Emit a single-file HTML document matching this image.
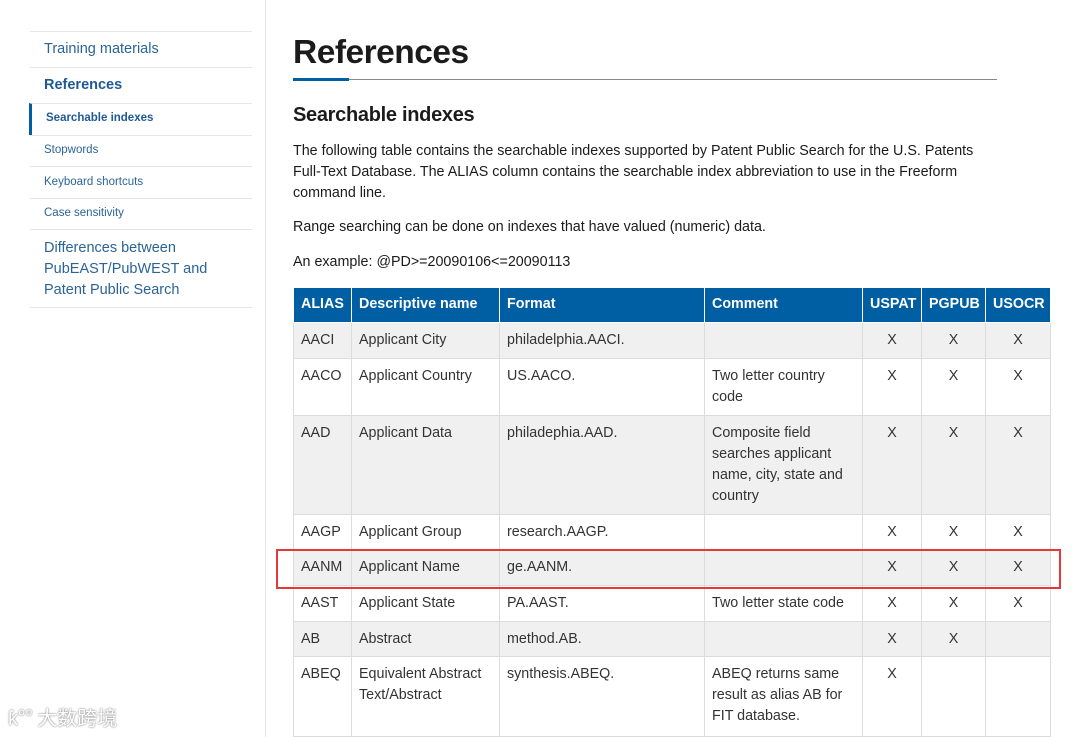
<!DOCTYPE html>
<html><head><meta charset="utf-8"><style>
*{margin:0;padding:0;box-sizing:border-box}
body{width:1080px;height:737px;overflow:hidden;background:#fff;font-family:"Liberation Sans",Arial,sans-serif;color:#1b1b1b;position:relative}
.side{position:absolute;left:0;top:0;width:266px;height:737px;border-right:1px solid #e6e6e6}
.nav{position:absolute;left:30px;width:222px;border-top:1px solid #e6e6e6;color:#2a6496}
.nav div{position:absolute;left:14px}
h1{position:absolute;left:293px;top:34px;font-size:33.5px;font-weight:bold;letter-spacing:-0.5px;color:#1b1b1b}
h2{position:absolute;left:293px;top:104px;font-size:20px;font-weight:bold;letter-spacing:-0.3px}
p{position:absolute;left:293px;font-size:14.3px;line-height:21px;width:700px}
table{position:absolute;left:293px;top:288px;width:757px;border-collapse:collapse;table-layout:fixed;font-size:14.3px}
td,th{border:1px solid #dcdcdc;padding:7px 7px 6px;line-height:21px;vertical-align:top;text-align:left;font-weight:normal;color:#333}
th{background:#005ea2;color:#fff;font-weight:bold;border-color:#fff;padding:6px 7px;height:34px;border-top:none}
tr.g td{background:#f0f0f0}
.c{text-align:center}
</style></head><body>
<div class="side">
 <div class="nav" style="top:31px;height:37px"><div style="top:9px;font-size:14.5px">Training materials</div></div>
 <div class="nav" style="top:67px;height:36px"><div style="top:9px;font-size:14.5px;font-weight:bold;color:#1f5a96">References</div></div>
 <div class="nav" style="top:103px;height:32px;border-left:3px solid #005ea2;left:29px;width:223px"><div style="top:8px;left:14px;font-size:11.5px;font-weight:bold;color:#1f5a96">Searchable indexes</div></div>
 <div class="nav" style="top:135px;height:32px"><div style="top:8px;font-size:11.5px">Stopwords</div></div>
 <div class="nav" style="top:166px;height:32px"><div style="top:9px;font-size:11.5px">Keyboard shortcuts</div></div>
 <div class="nav" style="top:198px;height:32px"><div style="top:8px;font-size:11.5px">Case sensitivity</div></div>
 <div class="nav" style="top:229px;height:79px;border-bottom:1px solid #e6e6e6"><div style="top:8px;font-size:14.5px;line-height:21px">Differences between<br>PubEAST/PubWEST and<br>Patent Public Search</div></div>
 <div style="position:absolute;left:8px;top:702px;font-size:20px;color:#fff;text-shadow:0 0 2px #888,0 0 1px #999;font-family:'Noto Sans CJK SC',sans-serif">ƙ°° 大数跨境</div>
</div>
<h1>References</h1>
<div style="position:absolute;left:293px;top:79px;width:704px;height:1px;background:#888"></div>
<div style="position:absolute;left:293px;top:78px;width:56px;height:3px;background:#005ea2"></div>
<h2>Searchable indexes</h2>
<p style="top:141px">The following table contains the searchable indexes supported by Patent Public Search for the U.S. Patents Full-Text Database. The ALIAS column contains the searchable index abbreviation to use in the Freeform command line.</p>
<p style="top:217px">Range searching can be done on indexes that have valued (numeric) data.</p>
<p style="top:252px">An example: @PD&gt;=20090106&lt;=20090113</p>
<table>
<colgroup><col style="width:58px"><col style="width:148px"><col style="width:205px"><col style="width:158px"><col style="width:59px"><col style="width:64px"><col style="width:65px"></colgroup>
<tr style="height:34px"><th>ALIAS</th><th>Descriptive name</th><th>Format</th><th>Comment</th><th>USPAT</th><th>PGPUB</th><th>USOCR</th></tr>
<tr class="g" style="height:36px"><td>AACI</td><td>Applicant City</td><td>philadelphia.AACI.</td><td></td><td class="c">X</td><td class="c">X</td><td class="c">X</td></tr>
<tr style="height:57px"><td>AACO</td><td>Applicant Country</td><td>US.AACO.</td><td>Two letter country code</td><td class="c">X</td><td class="c">X</td><td class="c">X</td></tr>
<tr class="g" style="height:99px"><td>AAD</td><td>Applicant Data</td><td>philadephia.AAD.</td><td>Composite field searches applicant name, city, state and country</td><td class="c">X</td><td class="c">X</td><td class="c">X</td></tr>
<tr style="height:35px"><td>AAGP</td><td>Applicant Group</td><td>research.AAGP.</td><td></td><td class="c">X</td><td class="c">X</td><td class="c">X</td></tr>
<tr class="g" style="height:36px"><td>AANM</td><td>Applicant Name</td><td>ge.AANM.</td><td></td><td class="c">X</td><td class="c">X</td><td class="c">X</td></tr>
<tr style="height:36px"><td>AAST</td><td>Applicant State</td><td>PA.AAST.</td><td>Two letter state code</td><td class="c">X</td><td class="c">X</td><td class="c">X</td></tr>
<tr class="g" style="height:35px"><td>AB</td><td>Abstract</td><td>method.AB.</td><td></td><td class="c">X</td><td class="c">X</td><td class="c"></td></tr>
<tr style="height:80px"><td>ABEQ</td><td>Equivalent Abstract Text/Abstract</td><td>synthesis.ABEQ.</td><td>ABEQ returns same result as alias AB for FIT database.</td><td class="c">X</td><td></td><td></td></tr>
</table>
<div style="position:absolute;left:276px;top:549px;width:785px;height:40px;border:2px solid #e53935"></div>
</body></html>
